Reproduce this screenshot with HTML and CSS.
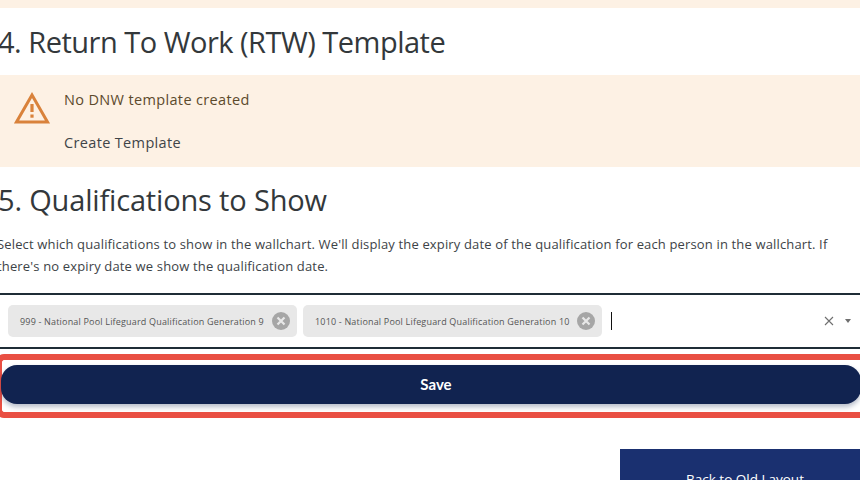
FILE: index.html
```html
<!DOCTYPE html>
<html lang="en">
<head>
    <meta charset="UTF-8">
    <meta name="viewport" content="width=device-width, initial-scale=1.0">
    <title>Wallchart Settings</title>
    <link rel="stylesheet" href="styles.css">
</head>
<body>
    <div class="top-strip"></div>

    <h2 class="section-title title-rtw">4. Return To Work (RTW) Template</h2>
    <div class="alert">
        <svg class="alert-icon" width="38" height="34" viewBox="0 0 38 34">
            <path d="M18 4 L33.5 31 H2.5 Z" fill="none" stroke="#d9823b" stroke-width="3"/>
            <rect x="16.4" y="13" width="3.2" height="8" fill="#d9823b"/>
            <rect x="16.4" y="23.5" width="3.2" height="3.2" fill="#d9823b"/>
        </svg>
        <div class="alert-text">
            <p class="alert-message">No DNW template created</p>
            <p class="alert-link">Create Template</p>
        </div>
    </div>

    <h2 class="section-title title-quals">5. Qualifications to Show</h2>
    <p class="help-text">Select which qualifications to show in the wallchart. We'll display the expiry date of the qualification for each person in the wallchart. If there's no expiry date we show the qualification date.</p>

    <div class="select">
        <div class="chip">
            <span>999 - National Pool Lifeguard Qualification Generation 9</span>
            <svg class="chip-x" width="18" height="18" viewBox="0 0 18 18">
                <circle cx="9" cy="9" r="9" fill="#a6a6a6"/>
                <path d="M5.5 5.5 L12.5 12.5 M12.5 5.5 L5.5 12.5" stroke="#e8e8e8" stroke-width="2.2"/>
            </svg>
        </div>
        <div class="chip">
            <span>1010 - National Pool Lifeguard Qualification Generation 10</span>
            <svg class="chip-x" width="18" height="18" viewBox="0 0 18 18">
                <circle cx="9" cy="9" r="9" fill="#a6a6a6"/>
                <path d="M5.5 5.5 L12.5 12.5 M12.5 5.5 L5.5 12.5" stroke="#e8e8e8" stroke-width="2.2"/>
            </svg>
        </div>
        <div class="caret"></div>
        <svg class="clear-x" width="10" height="10" viewBox="0 0 10 10">
            <path d="M1 1 L9 9 M9 1 L1 9" stroke="#6f6f6f" stroke-width="1.1"/>
        </svg>
        <div class="arrow"></div>
    </div>

    <div class="save-wrap">
        <button class="save-btn">Save</button>
    </div>

    <div class="footer">
        <button class="old-layout-btn">Back to Old Layout</button>
    </div>
</body>
</html>
```

FILE: styles.css
```css
html, body {
    margin: 0;
    padding: 0;
    height: 480px;
    overflow: hidden;
}
body {
    font-family: "Open Sans", "Noto Sans", sans-serif;
    background: #fff;
    color: #333;
}
.top-strip {
    height: 8px;
    background: #fdf1e4;
}
.section-title {
    font-weight: 400;
    font-size: 29px;
    line-height: 40px;
    color: #33383b;
    margin: 0 0 0 -2px;
}
.title-rtw {
    padding-top: 14px;
    padding-bottom: 13px;
    letter-spacing: -0.5px;
}
.title-quals {
    padding-top: 13px;
    padding-bottom: 13px;
    letter-spacing: -0.17px;
}
.alert {
    display: flex;
    height: 92px;
    box-sizing: border-box;
    background: #fdf1e4;
    padding: 16px 0 0 14px;
}
.alert-icon {
    margin: 0 12px 0 0;
    flex-shrink: 0;
}
.alert-text p {
    margin: 0;
    font-size: 14.5px;
    line-height: 18px;
    letter-spacing: 0.35px;
}
.alert-message {
    color: #5c4a2c;
}
.alert-link {
    color: #3f4448;
    margin-top: 25px !important;
}
.help-text {
    margin: 0 0 0 -3px;
    width: 845px;
    font-size: 13px;
    line-height: 22px;
    letter-spacing: 0.15px;
    color: #3d4347;
}
.select {
    display: flex;
    align-items: center;
    gap: 6px;
    height: 56px;
    box-sizing: border-box;
    margin-top: 16px;
    border-top: 2px solid #1f2d36;
    border-bottom: 2px solid #1f2d36;
    padding-left: 8px;
}
.chip {
    display: flex;
    align-items: center;
    justify-content: space-between;
    height: 32px;
    box-sizing: border-box;
    padding: 0 7px 0 12px;
    background: #e8e8e8;
    border-radius: 5px;
    font-size: 9px;
    letter-spacing: 0.18px;
    color: #555;
}
.chip:nth-child(1) {
    width: 289px;
}
.chip:nth-child(2) {
    width: 299px;
}
.caret {
    width: 1px;
    height: 18px;
    margin-left: 3px;
    background: #111;
}
.clear-x {
    margin-left: auto;
}
.arrow {
    width: 0;
    height: 0;
    margin: 0 9px 0 5px;
    border-left: 3.5px solid transparent;
    border-right: 3.5px solid transparent;
    border-top: 4px solid #6f6f6f;
}
.save-wrap {
    margin: 5px 0 0 -4px;
    height: 64px;
    box-sizing: border-box;
    border: 6px solid #e94f43;
    border-right: none;
    border-radius: 8px 0 0 8px;
    padding: 5px 0 0 0;
}
.save-btn {
    display: block;
    width: 860px;
    margin-left: -1px;
    height: 39px;
    padding: 0 0 2px 10px;
    border: none;
    border-radius: 16px;
    background: #112350;
    color: #fff;
    font-family: "Lato", "Liberation Sans", sans-serif;
    font-weight: bold;
    font-size: 15px;
    box-shadow: 0 3px 5px rgba(17, 35, 80, 0.3);
}
.footer {
    display: flex;
    justify-content: flex-end;
    margin-top: 31px;
}
.old-layout-btn {
    width: 240px;
    height: 60px;
    padding-left: 16px;
    border: none;
    background: #1a3070;
    color: #fff;
    font-family: "Open Sans", sans-serif;
    font-size: 13.5px;
}
```
